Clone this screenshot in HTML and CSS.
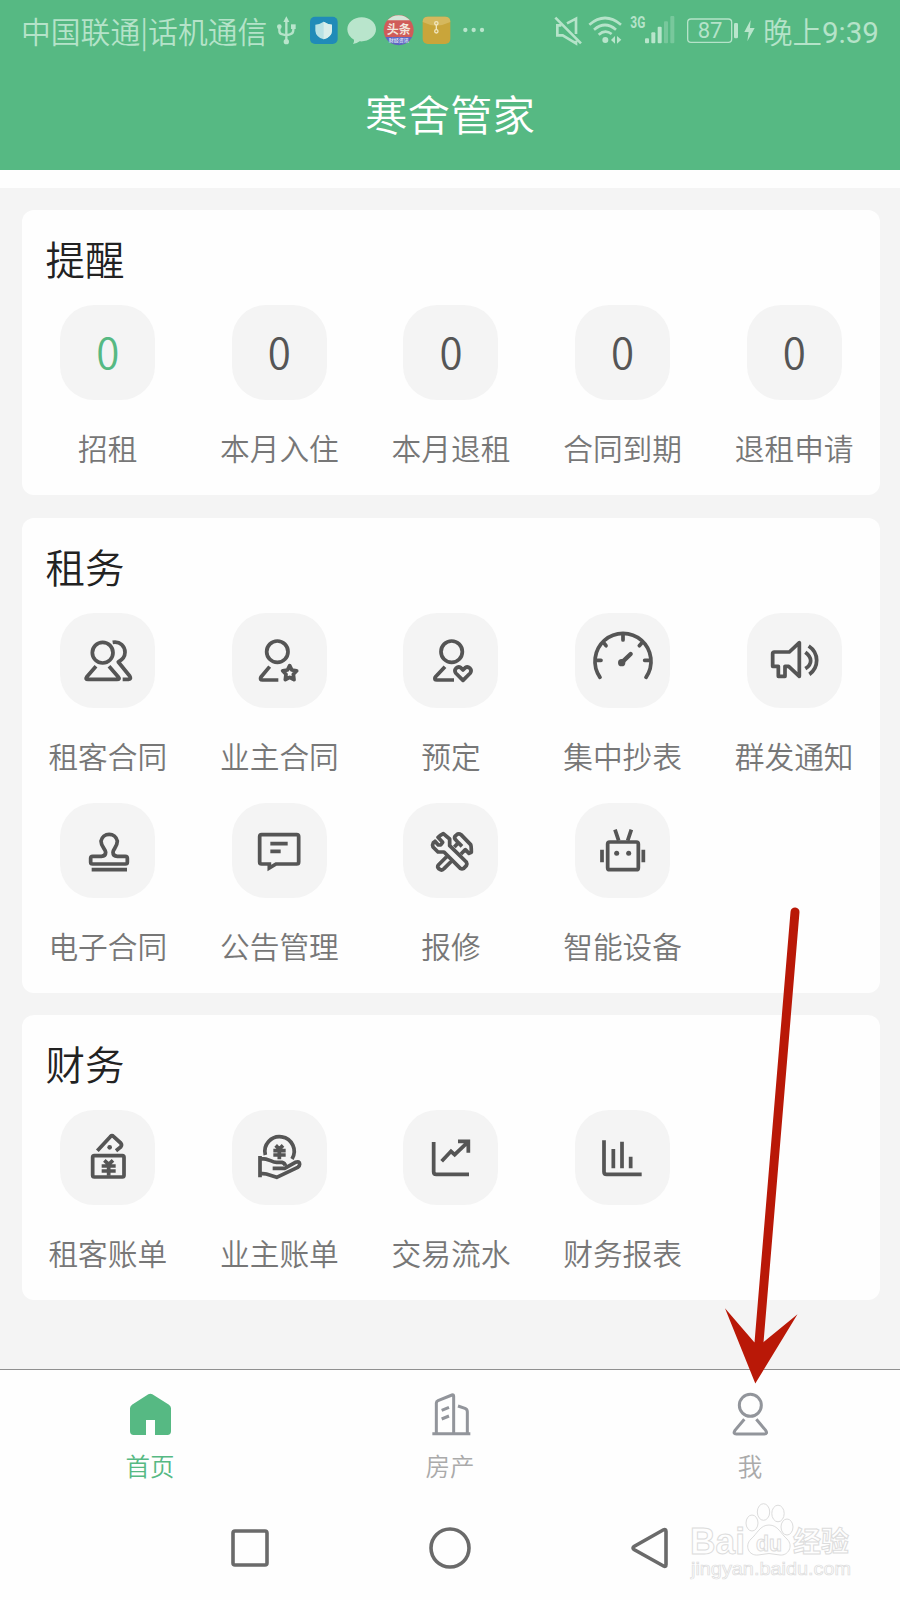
FILE: index.html
```html
<!DOCTYPE html>
<html lang="zh-CN">
<head>
<meta charset="utf-8">
<title>寒舍管家</title>
<link rel="stylesheet" href="styles.css">
</head>
<body>
<div class="screen">
  <header class="header">
    <div class="status">
      <span class="carrier">中国联通|话机通信</span>
      <svg class="status-left" viewBox="810 0 660 180">
        <g class="s-line" stroke-width="7"><path d="M859 62V122M838 84V92Q838 102 848 103L859 106M880 84V90Q880 101 870 103L859 106"/></g>
        <g class="s-fill"><path d="M859 49L868 66H850Z"/><circle cx="859" cy="125" r="8"/><circle cx="838" cy="80" r="7"/><rect x="873" y="73" width="14" height="14"/></g>
        <rect x="930" y="50" width="83" height="82" rx="15" fill="#208bb8"/>
        <path d="M971 65Q985 74 996 74V92Q995 110 971 118Q947 110 946 92V74Q957 74 971 65Z" fill="#b8e2e4"/>
        <path d="M971 65Q985 74 996 74V92Q995 110 971 118Z" fill="#d8eeea"/>
        <path class="s-fill" d="M1085 52C1109 52 1128 68 1128 88C1128 110 1105 126 1079 124Q1071 130 1059 132Q1063 126 1062 119Q1042 108 1042 88C1042 68 1061 52 1085 52Z"/>
        <circle cx="1196" cy="90" r="45" fill="#d05c59"/>
        <path d="M1162 61A45 45 0 0 1 1230 61Z" fill="#d5e6d9"/>
        <path d="M1156 111H1236A45 45 0 0 1 1156 111Z" fill="#5b66c4"/>
        <text class="tt" x="1196" y="102" text-anchor="middle">头条</text>
        <text class="tt-sub" x="1196" y="126" text-anchor="middle">财经资讯</text>
        <rect x="1268" y="50" width="83" height="82" rx="15" fill="#c9a53a"/>
        <path d="M1268 66Q1268 50 1284 50H1335Q1351 50 1351 66Q1330 76 1309 77Q1288 76 1268 66Z" fill="#d5b85d"/>
        <g fill="none" stroke="#f0e5bd" stroke-width="4"><circle cx="1309" cy="70" r="5"/><path d="M1309 75V90"/><circle cx="1309" cy="94" r="5"/></g>
        <g class="s-fill"><circle cx="1396" cy="90" r="6.5"/><circle cx="1421" cy="90" r="6.5"/><circle cx="1446" cy="90" r="6.5"/></g>
      </svg>
      <svg class="status-right" viewBox="150 0 630 180">
        <g class="s-line" stroke-width="8"><path d="M166 53L243 130M201 70L228 56V102M184 76H172V106H188L228 130V122"/></g>
        <g class="s-line" stroke-width="8"><path d="M268 74Q315 34 363 74M282 89Q315 61 348 89M296 104Q315 87 335 102"/></g>
        <circle class="s-fill" cx="316" cy="120" r="9"/>
        <path class="s-fill" d="M333 120L345 108V131ZM351 108L364 119L351 131Z"/>
        <text class="net" x="391" y="83" textLength="45" lengthAdjust="spacingAndGlyphs">3G</text>
        <g class="s-fill"><rect x="435" y="115" width="12" height="15" rx="3"/><rect x="454" y="97" width="12" height="33" rx="3"/><rect x="473" y="80" width="12" height="50" rx="3"/><g opacity=".35"><rect x="492" y="64" width="12" height="66" rx="3"/><rect x="511" y="48" width="12" height="82" rx="3"/></g></g>
        <rect class="s-line" x="563" y="57" width="132" height="70" rx="10" stroke-width="4"/>
        <rect class="s-fill" x="702" y="69" width="12" height="46" rx="4"/>
        <text class="batt" x="630" y="115" text-anchor="middle">87</text>
        <path class="s-fill" d="M752 60L733 96H746L742 124L764 84H750Z"/>
      </svg>
      <span class="time">晚上<span class="clock">9:39</span></span>
    </div>
    <h1 class="title">寒舍管家</h1>
  </header>

  <main class="content">
    <section class="card">
      <h2 class="card-title">提醒</h2>
      <div class="grid">
        <div class="item"><div class="tile num active">0</div><div class="label">招租</div></div>
        <div class="item"><div class="tile num">0</div><div class="label">本月入住</div></div>
        <div class="item"><div class="tile num">0</div><div class="label">本月退租</div></div>
        <div class="item"><div class="tile num">0</div><div class="label">合同到期</div></div>
        <div class="item"><div class="tile num">0</div><div class="label">退租申请</div></div>
      </div>
    </section>

    <section class="card">
      <h2 class="card-title">租务</h2>
      <div class="grid">
        <div class="item"><div class="tile"><svg class="icon" viewBox="0 0 285 285"><circle cx="128" cy="119" r="31"/><path d="M108 160L80 192Q75 199 84 199H171Q181 199 175 192L147 160M158 88C181 84 195 100 195 118C195 130 188 140 175 147L209 189Q215 199 206 199H188"/></svg></div><div class="label">租客合同</div></div>
        <div class="item"><div class="tile"><svg class="icon" viewBox="0 0 285 285"><circle cx="136" cy="116" r="32"/><path d="M113 161L87 192Q82 201 92 201H139M173 158L179.500 171L194 173.500L184 184L186 200L173 193L160 200L162 184L152 173.500L166.500 171Z"/></svg></div><div class="label">业主合同</div></div>
        <div class="item"><div class="tile"><svg class="icon" viewBox="0 0 285 285"><circle cx="146" cy="116" r="32"/><path d="M126 161L97 192Q92 201 102 201H153M180 202L158 180C151 169 164 158 173 164L180 171L187 164C196 158 209 169 202 180Z"/></svg></div><div class="label">预定</div></div>
        <div class="item"><div class="tile"><svg class="icon round" viewBox="0 0 285 285"><path d="M75 193A84 84 0 1 1 213 193M144 66V81M62 142H78M209 142H226M86 89L93 98M193 98L201 89"/><path d="M140 149L167 123" stroke-width="13"/><circle class="solid" cx="140" cy="149" r="11"/></svg></div><div class="label">集中抄表</div></div>
        <div class="item"><div class="tile"><svg class="icon" viewBox="0 0 285 285"><path d="M77 122Q77 117 82 117H127L157 89V190L125 160H114V190H94V160H77ZM175 118Q191 130 191 143Q191 157 175 167M185 99Q209 115 209 142Q209 169 187 184"/></svg></div><div class="label">群发通知</div></div>
        <div class="item"><div class="tile"><svg class="icon" viewBox="0 0 285 285"><path d="M98 160H124Q137 160 137 148C137 138 123 132 123 114A25 25 0 0 1 172 114C172 132 159 138 159 148Q159 160 172 160H196Q202 160 202 166V178Q202 183 196 183H98Q92 183 92 178V166Q92 160 98 160ZM95 200H201"/></svg></div><div class="label">电子合同</div></div>
        <div class="item"><div class="tile"><svg class="icon sharp" viewBox="0 0 285 285"><path d="M89 95H194Q200 95 200 101V177Q200 183 194 183H132L112 195V183H89Q83 183 83 177V101Q83 95 89 95ZM115 122H167M115 145H146"/></svg></div><div class="label">公告管理</div></div>
        <div class="item"><div class="tile"><svg class="icon" viewBox="0 0 285 285"><path d="M112 97L121 92L140 108V128L190 177Q193 182 190 188L182 196Q177 199 172 196L123 147H105L90 132Q87 126 91 119L96 115L106 126H113L119 118L105 103ZM130 162L106 186Q102 192 107 197L112 200Q118 203 123 197L149 171M154 132L166 119L156 108Q153 103 158 98L164 93Q169 91 174 95L203 125Q205 129 205 148L198 151L187 140L174 153M166 119L177 130"/></svg></div><div class="label">报修</div></div>
        <div class="item"><div class="tile"><svg class="icon sharp" viewBox="0 0 285 285"><rect x="98" y="117" width="92" height="83" rx="6"/><path d="M81 140V178M205 140V178M120 80L131 113M169 80L158 113"/><circle class="solid" cx="125" cy="151" r="7.500"/><circle class="solid" cx="161" cy="151" r="7.500"/></svg></div><div class="label">智能设备</div></div>
      </div>
    </section>

    <section class="card">
      <h2 class="card-title">财务</h2>
      <div class="grid">
        <div class="item"><div class="tile"><svg class="icon" viewBox="0 0 285 285"><rect x="98" y="137" width="94" height="64" rx="5"/><path d="M112 122L151 80Q156 75 161 80L182 99Q187 105 182 111L168 122M133 151L146 163L159 151M125 168H167M125 183H167M146 163V197"/><circle class="solid" cx="149" cy="112" r="7"/></svg></div><div class="label">租客账单</div></div>
        <div class="item"><div class="tile"><svg class="icon" viewBox="0 0 285 285"><path d="M100 135A44 44 0 1 1 180 147M131 106L142 117L153 106M124 122H161M124 135H161M142 117V148M84 138V202M84 146C108 143 118 157 134 157H150Q159 159 160 167M122 175H158L190 157Q203 152 203 163Q203 168 197 172L134 202L103 192Q97 190 84 191"/></svg></div><div class="label">业主账单</div></div>
        <div class="item"><div class="tile"><svg class="icon sharp" viewBox="0 0 285 285"><path d="M92 96V185Q92 193 100 193H198M116 154L144 124L155 134L196 95M165 94H196V128"/></svg></div><div class="label">交易流水</div></div>
        <div class="item"><div class="tile"><svg class="icon sharp" viewBox="0 0 285 285"><path d="M87 91V185Q87 193 95 193H200M115 117V175M141 95V175M167 140V175"/></svg></div><div class="label">财务报表</div></div>
      </div>
    </section>
  </main>

  <nav class="tabs">
    <div class="tab on">
      <svg class="tab-icon" viewBox="0 0 135 135"><path d="M61 7Q67 3 73 7L123 38Q129 43 129 49V118Q129 129 118 129H81V84H54V129H17Q6 129 6 118V49Q6 43 12 38Z" fill="#56b983"/></svg>
      <span>首页</span>
    </div>
    <div class="tab">
      <svg class="tab-icon outline" viewBox="-3 0 135 135"><path d="M10 125H124M22 123V33Q22 28 27 26L69 9Q74 7 74 13V123M87 42L108 49Q115 52 115 59V123M38 55L60 46M38 81L60 72"/></svg>
      <span>房产</span>
    </div>
    <div class="tab">
      <svg class="tab-icon outline" viewBox="0 0 135 135"><circle cx="67" cy="40" r="33"/><path d="M49 82L21 115Q14 126 25 126H109Q120 126 113 115L85 82"/></svg>
      <span>我</span>
    </div>
  </nav>

  <footer class="sysnav">
    <svg class="sys" viewBox="0 0 44 44"><rect x="5" y="5" width="34" height="34" rx="2"/></svg>
    <svg class="sys" viewBox="0 0 44 44"><circle cx="22" cy="22" r="19"/></svg>
    <svg class="sys" viewBox="0 0 44 44"><path d="M35.500 3.800Q38 2.800 38 5.500V38.500Q38 41.200 35.500 40L6 23.500Q4 22 6 20.500Z"/></svg>
  </footer>

  <svg class="watermark" viewBox="0 0 170 84">
    <g class="paw"><ellipse cx="66" cy="26" rx="6" ry="8"/><ellipse cx="77.500" cy="15" rx="6.200" ry="8.300"/><ellipse cx="92" cy="16.500" rx="6.200" ry="8.300"/><ellipse cx="101" cy="30" rx="6" ry="8"/><path d="M83 28C92 28 95 37 101 42C108 49 102 59 94 58Q83 55 72 58C63 59 58 49 65 42C71 37 74 28 83 28Z"/></g>
    <text class="wm-big" x="4" y="57" textLength="55" lengthAdjust="spacingAndGlyphs">Bai</text>
    <text class="wm-du" x="70" y="54" textLength="26" lengthAdjust="spacingAndGlyphs">du</text>
    <text class="wm-cn" x="107" y="55" textLength="56">经验</text>
    <text class="wm-url" x="5" y="78" textLength="160" lengthAdjust="spacingAndGlyphs">jingyan.baidu.com</text>
  </svg>
  <svg class="arrow" viewBox="720 900 85 490"><path d="M795 912L758.800 1345" stroke="#b91807" stroke-width="9" stroke-linecap="round"/><path d="M725 1308.300L754.300 1342.300H763.300L797.500 1314.300L755.300 1383.500Z" fill="#b91807"/></svg>
</div>
</body>
</html>
```
FILE: styles.css
```css
* { box-sizing: border-box; }
body {
  margin: 0;
  background: #fefefe;
  font-family: "Noto Sans CJK SC", "Noto Sans", sans-serif;
  font-weight: 350;
}
.screen {
  position: relative;
  width: 900px;
  height: 1600px;
  overflow: hidden;
  display: flex;
  flex-direction: column;
}
svg { display: block; flex: none; }

.header { height: 170px; background: #56b983; color: #fff; }
.status {
  height: 60px;
  padding-left: 21px;
  display: flex;
  color: #b5e3c9;
  line-height: 60px;
  white-space: nowrap;
}
.carrier { width: 249px; font-size: 29.8px; }
.status-left { width: 220px; height: 60px; }
.status-right { width: 210px; height: 60px; margin-left: 60px; }
.time { margin-left: 3px; font-size: 29.5px; }
.clock { font-family: Roboto, sans-serif; font-size: 29.5px; font-weight: 400; }
.s-line { fill: none; stroke: #b5e3c9; }
.s-fill { fill: #b9e5cc; }
.tt { font-size: 36px; font-weight: 700; fill: #f3e6dc; }
.tt-sub { font-size: 15px; font-weight: 700; fill: #d5dcef; }
.net { font-family: Roboto, sans-serif; font-size: 48px; font-weight: 700; fill: #b5e3c9; }
.batt { font-family: Roboto, sans-serif; font-size: 66px; font-weight: 400; fill: #b5e3c9; }
.title {
  margin: 25px 0 0;
  text-align: center;
  font-size: 42.5px;
  line-height: 56px;
  font-weight: 350;
}

.content {
  height: 1181px;
  margin-top: 18px;
  padding: 22px 20px 0 22px;
  background: #f4f4f4;
  display: flex;
  flex-direction: column;
  gap: 22.500px;
}
.card {
  padding: 28px 0 31px;
  border-radius: 12px;
  background: #fefefe;
}
.card-title {
  margin: 0 0 27px 23.500px;
  font-size: 39.500px;
  line-height: 40px;
  font-weight: 350;
  color: #222;
}
.grid {
  display: grid;
  grid-template-columns: repeat(5, 1fr);
  row-gap: 31px;
}
.item { display: flex; flex-direction: column; align-items: center; }
.tile {
  width: 95px;
  height: 95px;
  border-radius: 34px;
  background: #f4f4f4;
}
.num {
  text-align: center;
  font-size: 42px;
  line-height: 91px;
  color: #555;
}
.active { color: #56b983; }
.label {
  margin: 33px 0 1px;
  height: 30px;
  line-height: 30px;
  font-size: 29.700px;
  color: #777;
  white-space: nowrap;
}
.icon {
  width: 95px;
  height: 95px;
  fill: none;
  stroke: #555;
  stroke-width: 11.200;
  stroke-linejoin: round;
}
.sharp { stroke-linejoin: miter; }
.round { stroke-linecap: round; }
.solid { fill: #555; stroke: none; }

.tabs {
  height: 123px;
  border-top: 1px solid #8f8f8f;
  padding-top: 22px;
  display: grid;
  grid-template-columns: repeat(3, 1fr);
}
.tab {
  display: flex;
  flex-direction: column;
  align-items: center;
  gap: 13px;
  font-size: 24.500px;
  line-height: 32px;
  color: #aaa;
}
.on { color: #56b983; }
.tab-icon { width: 45px; height: 45px; }
.outline { fill: none; stroke: #92959b; stroke-width: 9; }

.sysnav {
  height: 108px;
  padding: 33.500px 0 0 228px;
  display: flex;
  gap: 156px;
}
.sys { width: 44px; height: 44px; fill: none; stroke: #6a6a6a; stroke-width: 3.600; }

.watermark { position: absolute; left: 686px; top: 1497px; width: 170px; height: 84px; }
.paw, .watermark text { fill: #fefefe; stroke: #dcdcdc; stroke-width: 1; }
.watermark .wm-big { font: 700 37px "Liberation Sans", sans-serif; }
.watermark .wm-du { font: 700 22px "Liberation Sans", sans-serif; }
.watermark .wm-cn { font: 700 28px "Noto Sans CJK SC", sans-serif; }
.watermark .wm-url { font: 400 19px "Liberation Sans", sans-serif; stroke-width: .7; }
.arrow { position: absolute; left: 720px; top: 900px; width: 85px; height: 490px; }
```
